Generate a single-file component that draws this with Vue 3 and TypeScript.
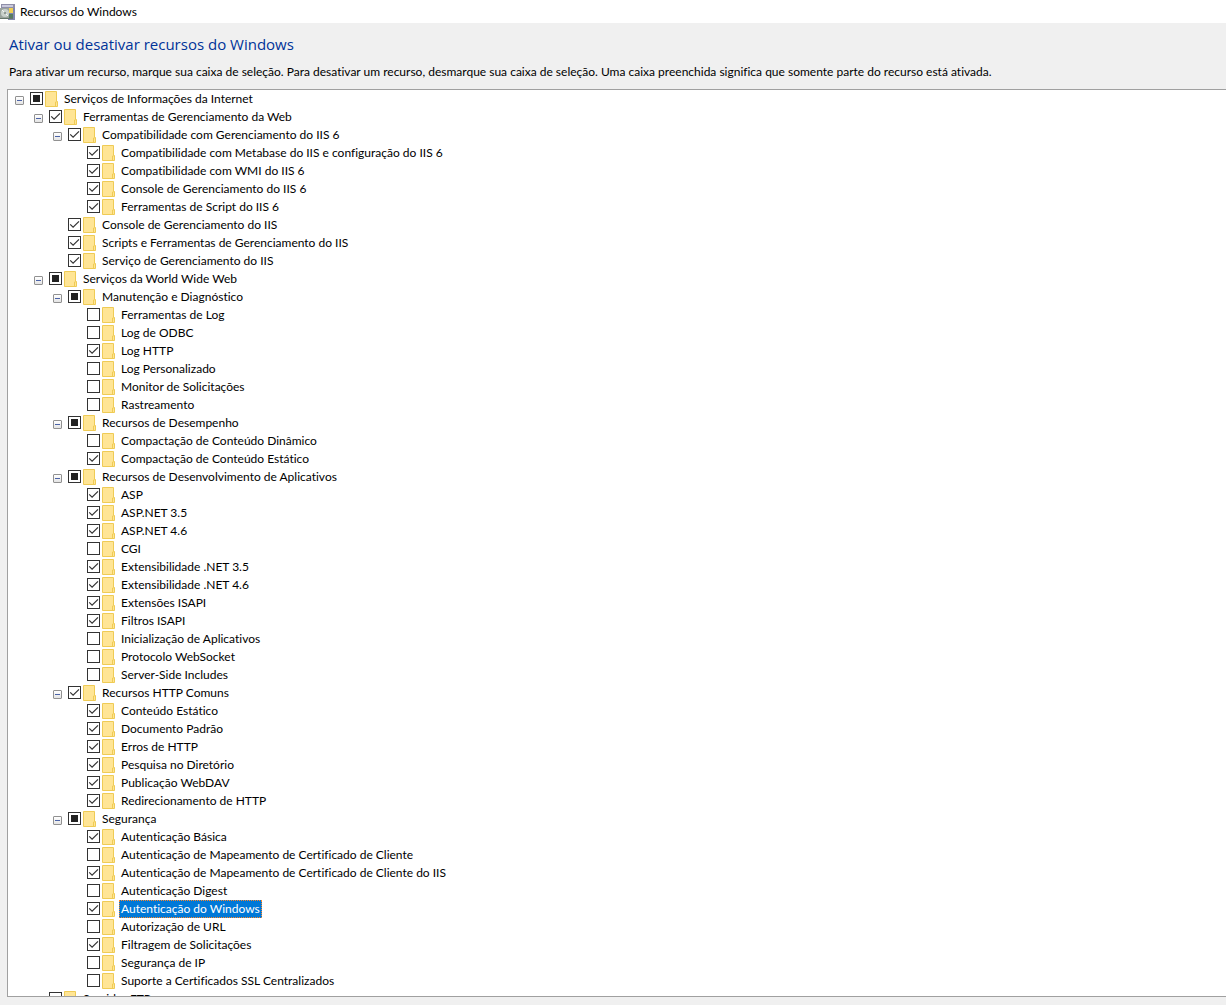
<script setup lang="ts">
import { computed, ref } from 'vue'

type State = 'on' | 'off' | 'part'

interface Feature {
  id: number
  depth: number
  state: State
  name: string
  parent: boolean
}

// One feature per line: leading dots give the depth, then the state mark
// (# partly enabled, + enabled, - disabled) and the name.
const source = `
# Serviços de Informações da Internet
.+ Ferramentas de Gerenciamento da Web
..+ Compatibilidade com Gerenciamento do IIS 6
...+ Compatibilidade com Metabase do IIS e configuração do IIS 6
...+ Compatibilidade com WMI do IIS 6
...+ Console de Gerenciamento do IIS 6
...+ Ferramentas de Script do IIS 6
..+ Console de Gerenciamento do IIS
..+ Scripts e Ferramentas de Gerenciamento do IIS
..+ Serviço de Gerenciamento do IIS
.# Serviços da World Wide Web
..# Manutenção e Diagnóstico
...- Ferramentas de Log
...- Log de ODBC
...+ Log HTTP
...- Log Personalizado
...- Monitor de Solicitações
...- Rastreamento
..# Recursos de Desempenho
...- Compactação de Conteúdo Dinâmico
...+ Compactação de Conteúdo Estático
..# Recursos de Desenvolvimento de Aplicativos
...+ ASP
...+ ASP.NET 3.5
...+ ASP.NET 4.6
...- CGI
...+ Extensibilidade .NET 3.5
...+ Extensibilidade .NET 4.6
...+ Extensões ISAPI
...+ Filtros ISAPI
...- Inicialização de Aplicativos
...- Protocolo WebSocket
...- Server-Side Includes
..+ Recursos HTTP Comuns
...+ Conteúdo Estático
...+ Documento Padrão
...+ Erros de HTTP
...+ Pesquisa no Diretório
...+ Publicação WebDAV
...+ Redirecionamento de HTTP
..# Segurança
...+ Autenticação Básica
...- Autenticação de Mapeamento de Certificado de Cliente
...+ Autenticação de Mapeamento de Certificado de Cliente do IIS
...- Autenticação Digest
...+ Autenticação do Windows
...- Autorização de URL
...+ Filtragem de Solicitações
...- Segurança de IP
...- Suporte a Certificados SSL Centralizados
.- Servidor FTP`

const marks: Record<string, State> = { '#': 'part', '+': 'on', '-': 'off' }

const parsed = source.trim().split('\n').map((line) => {
  const depth = line.search(/[^.]/)
  return { depth, state: marks[line[depth]], name: line.slice(depth + 2) }
})

const features = ref<Feature[]>(
  parsed.map((item, id) => ({
    ...item,
    id,
    parent: id + 1 < parsed.length && parsed[id + 1].depth > item.depth,
  })),
)

const collapsed = ref<number[]>([])
const selected = ref(parsed.findIndex((item) => item.name === 'Autenticação do Windows'))

const visible = computed(() => {
  let hiddenBelow = Infinity
  return features.value.filter((item) => {
    if (item.depth > hiddenBelow) return false
    hiddenBelow = collapsed.value.includes(item.id) ? item.depth : Infinity
    return true
  })
})

function toggleBranch(id: number) {
  collapsed.value = collapsed.value.includes(id)
    ? collapsed.value.filter((other) => other !== id)
    : [...collapsed.value, id]
}

function toggleFeature(item: Feature) {
  item.state = item.state === 'on' ? 'off' : 'on'
  selected.value = item.id
}
</script>

<template>
  <div class="window">
    <header class="titlebar">
      <svg class="app-icon" viewBox="0 0 15 16" aria-hidden="true">
        <path d="M1 0h14v4H1z" fill="#8f8fa8" />
        <path d="M2 1h11v2H2z" fill="#c9c9dc" />
        <path d="M8 4h7v12H8z" fill="#8187ad" />
        <path d="M8 4h5v5H8z" fill="#f0cf55" />
        <path d="M0 4h9v11H0z" fill="#9aa39e" />
        <path d="M9 10h4v5H9z" fill="#587b63" />
        <circle cx="5" cy="9" r="4" fill="#c9d0cc" />
        <path d="M5 9L2 6M5 9l3 3" stroke="#f4f6f5" stroke-width="1" />
        <circle cx="5" cy="9" r="1" fill="#77807b" />
        <path d="M0 14h13v1H0z" fill="#66756c" />
      </svg>
      <span>Recursos do Windows</span>
    </header>
    <main class="body">
      <h1>Ativar ou desativar recursos do Windows</h1>
      <p>
        Para ativar um recurso, marque sua caixa de seleção. Para desativar um recurso, desmarque
        sua caixa de seleção. Uma caixa preenchida significa que somente parte do recurso está
        ativada.
      </p>
      <ul class="tree">
        <li v-for="item in visible" :key="item.id" class="row">
          <span v-for="n in item.depth" :key="n" class="indent"></span>
          <button
            v-if="item.parent"
            type="button"
            class="expander"
            :class="{ closed: collapsed.includes(item.id) }"
            :aria-label="item.name"
            :aria-expanded="!collapsed.includes(item.id)"
            @click="toggleBranch(item.id)"
          ></button>
          <span v-else class="expander-space"></span>
          <span class="check">
            <input
              :id="`feature-${item.id}`"
              type="checkbox"
              :checked="item.state === 'on'"
              :indeterminate.prop="item.state === 'part'"
              @change="toggleFeature(item)"
            />
            <svg v-if="item.state === 'on'" viewBox="0 0 13 13" aria-hidden="true">
              <path d="M2.2 6.3l2.9 2.9 5.9-5.9" fill="none" stroke="#333" stroke-width="1.2" />
            </svg>
          </span>
          <svg class="folder" viewBox="0 0 14 16" aria-hidden="true">
            <path d="M1.5 .5h11v10h1v5h-12z" fill="#ffe595" stroke="#efcb55" />
            <path d="M11.5 15.5v-4.500h1" fill="none" stroke="#efcb55" />
          </svg>
          <label :for="`feature-${item.id}`" :class="{ selected: item.id === selected }">{{ item.name }}</label>
        </li>
      </ul>
    </main>
  </div>
</template>

<style>
body {
  margin: 0;
  background: #f0f0f0;
}
</style>

<style scoped>
.window {
  display: flex;
  flex-direction: column;
  height: 100vh;
  color: #000;
  font-family: Lato, "Open Sans", sans-serif;
  font-size: 12px;
  font-variant-ligatures: none;
  line-height: 18px;
}

.titlebar {
  display: flex;
  align-items: center;
  gap: 5px;
  height: 23px;
  background: #fff;
}

.app-icon {
  width: 15px;
  height: 16px;
}

.body {
  display: flex;
  flex: 1;
  flex-direction: column;
  min-height: 0;
  padding: 9px 0 8px 7px;
}

h1 {
  margin: 0 2px;
  color: #003399;
  font-family: "Open Sans", "Noto Sans", sans-serif;
  font-size: 15px;
  font-weight: 400;
  line-height: 24px;
}

p {
  margin: 7px 2px 8px;
  white-space: nowrap;
}

.tree {
  flex: 1;
  min-height: 0;
  margin: 0;
  padding: 0;
  overflow: hidden;
  border: 1px solid #a0a0a0;
  border-right: 0;
  background: #fff;
  list-style: none;
}

.row {
  display: flex;
  align-items: flex-start;
  height: 18px;
  padding-left: 7px;
}

.indent {
  width: 19px;
}

.expander,
.expander-space {
  width: 9px;
  margin: 6px 6px 0 0;
}

.expander {
  position: relative;
  height: 9px;
  padding: 0;
  border: 1px solid #919191;
  border-radius: 1px;
  background: linear-gradient(#fff, #e4e4e4);
}

.expander::before,
.expander.closed::after {
  position: absolute;
  top: 3px;
  left: 1px;
  width: 5px;
  height: 1px;
  background: #4b63a7;
  content: "";
}

.expander.closed::after {
  transform: rotate(90deg);
}

.check {
  position: relative;
  width: 13px;
  height: 13px;
  margin: 2px 1px 0 0;
}

.check input {
  display: block;
  width: 13px;
  height: 13px;
  margin: 0;
  appearance: none;
  border: 1px solid #333;
  background: #fff;
}

.check input:indeterminate {
  background: linear-gradient(#222, #222) center / 7px 7px no-repeat #fff;
}

.check svg {
  position: absolute;
  inset: 0;
  width: 13px;
  height: 13px;
  pointer-events: none;
}

.folder {
  width: 14px;
  height: 16px;
  margin: 1px 4px 0 0;
}

label {
  padding: 0 2px;
  white-space: nowrap;
}

label.selected {
  outline: 1px dotted #ff8728;
  outline-offset: -1px;
  background: #0078d7;
  color: #fff;
}
</style>
